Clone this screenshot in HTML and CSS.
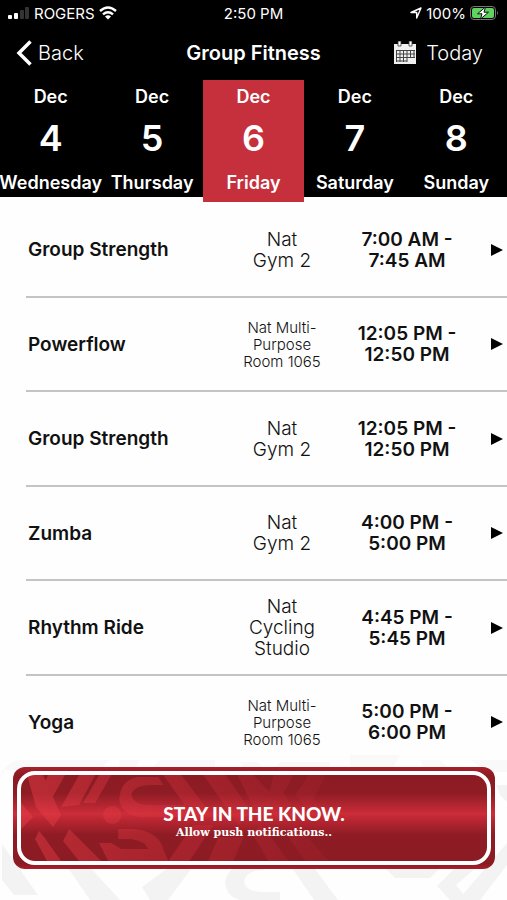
FILE: index.html
```html
<!DOCTYPE html>
<html lang="en">
<head>
<meta charset="utf-8">
<meta name="viewport" content="width=device-width, initial-scale=1">
<title>Group Fitness</title>
<link rel="stylesheet" href="styles.css">
</head>
<body>
<header class="top">
  <div class="status">
    <div class="status-side">
      <svg width="22" height="14" viewBox="0 0 22 14" aria-hidden="true"><rect y="9" width="4" height="4" rx="1" fill="#fff"/><rect x="6" y="7" width="4" height="6" rx="1" fill="#fff"/><rect x="12" y="4" width="4" height="9" rx="1" fill="#333"/><rect x="17" y="1" width="4" height="12" rx="1" fill="#333"/></svg>
      <span>ROGERS</span>
      <svg width="18" height="14" viewBox="0 0 18 14" fill="none" stroke="#fff" stroke-width="2.4" aria-hidden="true"><path d="M1 5Q9-2 17 5M4 8.300Q9 4 14 8.300"/><path d="M6 10.500Q9 8 12 10.500L9 13.500Z" fill="#fff" stroke="none"/></svg>
    </div>
    <span>2:50 PM</span>
    <div class="status-side status-right">
      <svg width="12" height="12" viewBox="0 0 12 12" fill="none" stroke="#fff" stroke-width="1.400" stroke-linejoin="round" aria-hidden="true"><path d="M1 5.500L11 1L6.700 11V5.500Z"/></svg>
      <span>100%</span>
      <svg width="29" height="14" viewBox="0 0 29 14" aria-hidden="true"><rect x=".5" y=".5" width="25" height="13" rx="3.500" fill="none" stroke="#777"/><rect x="2" y="2" width="22" height="10" rx="2" fill="#5fd35f"/><path d="M27 5Q29 7 27 9Z" fill="#777"/><path d="M15.500 1L7.500 7.800H12L10.500 13L18.500 6.200H14Z" fill="#fff" stroke="#111" stroke-width="1"/></svg>
    </div>
  </div>
  <nav class="nav">
    <button class="nav-btn" type="button">
      <svg width="16" height="26" viewBox="0 0 16 26" fill="none" stroke="#fff" stroke-width="3.500" aria-hidden="true"><path d="M14.500 1.500L3 13L14.500 24.500"/></svg>
      <span>Back</span>
    </button>
    <h1>Group Fitness</h1>
    <button class="nav-btn nav-right" type="button">
      <svg width="24" height="24" viewBox="0 0 24 24" aria-hidden="true"><path d="M1 3H23V23H1Z" fill="#f0f0f0"/><path d="M5 0h3v5H5zM16 0h3v5h-3z" fill="#fff" stroke="#333" stroke-width=".8"/><path d="M3 9.500H22M3 13H22M3 16.500H22M3 20H14M3.500 9V21M7 9V21M10.500 9V21M14 9V21M17.500 9V17M21 9V17" stroke="#444" fill="none"/></svg>
      <span>Today</span>
    </button>
  </nav>
  <div class="days">
    <button class="day" type="button"><span>Dec</span><b>4</b><span>Wednesday</span></button>
    <button class="day" type="button"><span>Dec</span><b>5</b><span>Thursday</span></button>
    <button class="day selected" type="button" aria-pressed="true"><span>Dec</span><b>6</b><span>Friday</span></button>
    <button class="day" type="button"><span>Dec</span><b>7</b><span>Saturday</span></button>
    <button class="day" type="button"><span>Dec</span><b>8</b><span>Sunday</span></button>
  </div>
</header>
<main class="classes">
  <a class="row" href="#"><strong>Group Strength</strong><span class="place">Nat<br>Gym 2</span><span class="time">7:00 AM -<br>7:45 AM</span><svg class="arrow" viewBox="0 0 12 12"><path d="M0 0L12 6L0 12Z"/></svg></a>
  <a class="row" href="#"><strong>Powerflow</strong><span class="place small">Nat Multi-<br>Purpose<br>Room 1065</span><span class="time">12:05 PM -<br>12:50 PM</span><svg class="arrow" viewBox="0 0 12 12"><path d="M0 0L12 6L0 12Z"/></svg></a>
  <a class="row" href="#"><strong>Group Strength</strong><span class="place">Nat<br>Gym 2</span><span class="time">12:05 PM -<br>12:50 PM</span><svg class="arrow" viewBox="0 0 12 12"><path d="M0 0L12 6L0 12Z"/></svg></a>
  <a class="row" href="#"><strong>Zumba</strong><span class="place">Nat<br>Gym 2</span><span class="time">4:00 PM -<br>5:00 PM</span><svg class="arrow" viewBox="0 0 12 12"><path d="M0 0L12 6L0 12Z"/></svg></a>
  <a class="row" href="#"><strong>Rhythm Ride</strong><span class="place">Nat<br>Cycling<br>Studio</span><span class="time">4:45 PM -<br>5:45 PM</span><svg class="arrow" viewBox="0 0 12 12"><path d="M0 0L12 6L0 12Z"/></svg></a>
  <a class="row" href="#"><strong>Yoga</strong><span class="place small">Nat Multi-<br>Purpose<br>Room 1065</span><span class="time">5:00 PM -<br>6:00 PM</span><svg class="arrow" viewBox="0 0 12 12"><path d="M0 0L12 6L0 12Z"/></svg></a>
</main>
<footer class="foot">
  <svg class="pattern" viewBox="0 0 507 160" preserveAspectRatio="none" aria-hidden="true">
    <path fill="#f9f9f9" d="M2 60V38Q4 20 24 20H110L100 30H2ZM120 20H140L134 30H118ZM160 20H215V30H150ZM240 22H258L264 30H244ZM280 22H330V30H274ZM350 15H400L392 30H350ZM420 20H440L450 30H425ZM470 20H507V32H490Z"/>
    <path fill="#f3f3f3" d="M2 104L38 155H14L2 140ZM66 125H88L120 160H90ZM172 125H194L168 160H150L142 147ZM264 130Q246 130 244 142Q246 152 262 152H280V160H240Q226 156 225 142Q228 128 240 126H264ZM290 125H312L338 160H314ZM385 128H440L430 138H395ZM455 128H476L456 145L468 160H450L437 146ZM496 45H507V62L500 55ZM507 103V125L480 160H458Z"/>
  </svg>
  <button class="banner" type="button">
    <svg class="art" viewBox="0 0 481 102" preserveAspectRatio="none" aria-hidden="true">
      <defs><linearGradient id="fade" gradientUnits="userSpaceOnUse" x1="0" y1="0" x2="340" y2="0"><stop offset="0" stop-color="#f0404a" stop-opacity=".45"/><stop offset=".5" stop-color="#e03540" stop-opacity=".3"/><stop offset="1" stop-color="#c42c38" stop-opacity=".1"/></linearGradient></defs>
      <g fill="url(#fade)"><path d="M8 36L20 50L8 62ZM14 8H30L48 48L40 60L23 40ZM35 8H52L35 38L26 30ZM66 8H82L66 38L48 40ZM86 8H98L82 36H70ZM26 64L31 70L48 94H34L22 72ZM56 62L88 94H66L50 74Z"/><circle cx="99" cy="48" r="9"/><path d="M145 10H125Q108 12 106 32Q108 48 128 50H175V38H135Q120 38 118 27Q122 18 138 18H150ZM86 76H98L108 82H135Q132 74 118 72H105V62H120Q145 64 150 82L155 94H95ZM150 8H168L200 50H180ZM190 8H212L238 45L225 58ZM224 8H240L270 40L247 55ZM260 8H280L270 26L285 50H267L255 28ZM295 8H312L300 32L315 45H296L282 28ZM155 94L180 58H200L176 94ZM205 70H230L220 94H195ZM248 58L275 94H255L238 66ZM285 60L315 94H292L272 66Z"/></g>
    </svg>
    <span class="copy"><span class="headline">STAY IN THE KNOW.</span><span class="sub">Allow push notifications..</span></span>
  </button>
</footer>
</body>
</html>
```
FILE: styles.css
```css
* { box-sizing: border-box; }
body {
  margin: 0;
  min-height: 100vh;
  display: flex;
  flex-direction: column;
  background: #fefefe;
  color: #111;
  font-family: Inter, "Liberation Sans", sans-serif;
}
button { border: 0; padding: 0; background: none; color: inherit; font: inherit; }
svg { display: block; flex: none; }
.top {
  color: #fff;
  background: linear-gradient(#000, #000) no-repeat 0 0 / 100% calc(100% - 5px);
}
.status {
  display: grid;
  grid-template-columns: 1fr auto 1fr;
  align-items: center;
  height: 26px;
  padding: 0 8px;
  font-size: 15px;
}
.status-side { display: flex; align-items: center; gap: 4px; }
.status-right { justify-content: flex-end; }
.nav {
  display: grid;
  grid-template-columns: 1fr auto 1fr;
  align-items: center;
  height: 54px;
  padding: 0 16px;
}
.nav h1 { margin: 0; font-size: 20px; font-weight: 600; }
.nav-btn { display: flex; align-items: center; gap: 6px; font-size: 20px; font-weight: 300; }
.nav-right { justify-self: end; gap: 9px; margin-right: 8px; }
.days { display: grid; grid-template-columns: repeat(5, minmax(0, 1fr)); }
.day {
  display: flex;
  flex-direction: column;
  align-items: center;
  height: 122px;
  padding-top: 5px;
  font-size: 18px;
  font-weight: 600;
  line-height: 24px;
}
.day b { font-size: 36px; font-weight: 600; line-height: 58px; }
.day.selected { background: #c6303c; }
.day span:last-child { line-height: 31px; }
.classes { flex: 1; display: grid; grid-auto-rows: 1fr; margin-left: 26px; padding-top: 1px; }
.row {
  display: grid;
  grid-template-columns: 1fr 110px 140px 30px;
  align-items: center;
  padding: 1px 0 0 2px;
  border-bottom: 2px solid #c4c4c4;
  color: #111;
  text-decoration: none;
  line-height: 21px;
}
.row:last-child { border-bottom-color: transparent; }
.row strong { font-size: 19px; font-weight: 600; }
.place { text-align: center; font-size: 19px; font-weight: 300; }
.place.small { font-size: 15px; line-height: 17px; }
.time { text-align: center; font-size: 19px; font-weight: 600; }
.arrow { width: 12px; height: 12px; justify-self: end; margin-right: 4px; }
.foot { position: relative; height: 130px; padding: 0 12px 0 13px; }
.pattern { position: absolute; left: 0; bottom: 0; width: 100%; height: 160px; z-index: -1; }
.banner {
  position: relative;
  display: flex;
  width: 100%;
  height: 102px;
  margin-top: -3px;
  padding: 4px;
  border-radius: 12px;
  overflow: hidden;
  background: linear-gradient(#a8202c 0, #8b1b23 8%, #8f1c25 26%, #cc2d39 46%, #b92632 52%, #8f1c25 66%, #8b1b23 95%, #a8202c 100%);
  color: #fff;
}
.art { position: absolute; inset: 0; width: 100%; height: 100%; }
.copy {
  position: relative;
  flex: 1;
  align-self: stretch;
  display: flex;
  flex-direction: column;
  align-items: center;
  justify-content: center;
  padding-top: 8px;
  border: 4px solid #fff;
  border-radius: 18px;
}
.headline { font-family: Lato, sans-serif; font-size: 19px; font-weight: 900; line-height: 22px; }
.sub { font-family: "DejaVu Serif", serif; font-size: 11px; font-weight: 700; line-height: 16px; }
```
